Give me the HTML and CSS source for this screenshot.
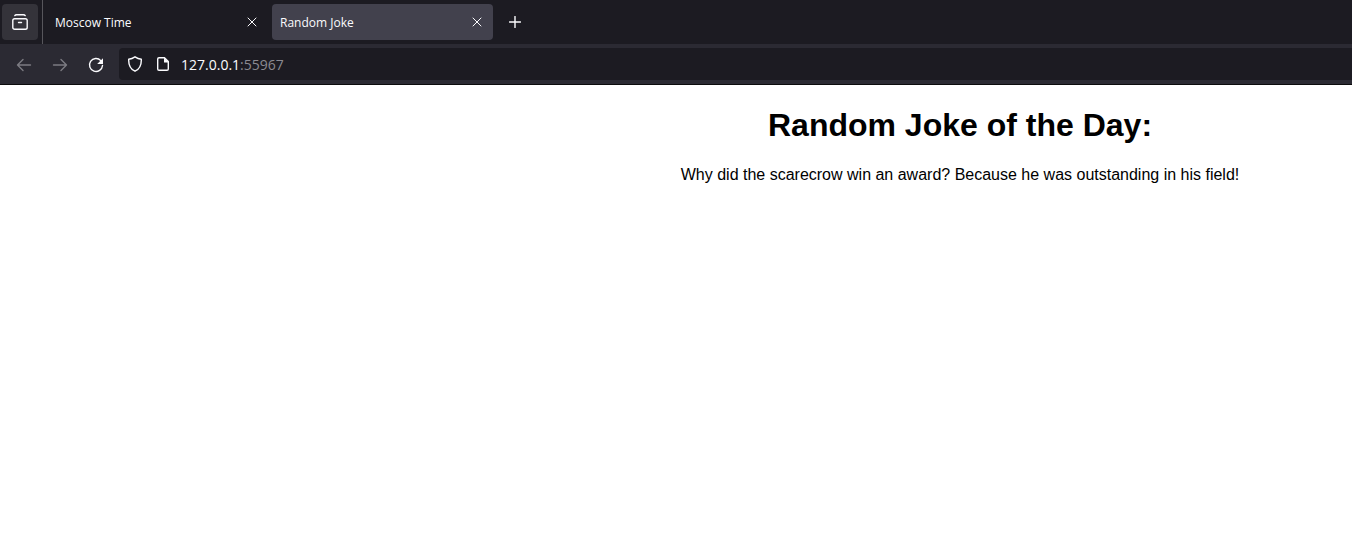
FILE: index.html
```
<!DOCTYPE html>
<html lang="en">
<head>
<meta charset="utf-8">
<title>Random Joke</title>
<link rel="stylesheet" href="styles.css">
</head>
<body>
<header class="browser">
  <div class="tabstrip">
    <button class="overview" type="button" aria-label="Recent browsing">
      <svg class="icon" viewBox="0 0 16 16"><path d="M2.800 1.600Q3.300 .8 4.500.8h7q1.200 0 1.700.8"/><rect x=".8" y="4.700" width="14.400" height="10.500" rx="1.800"/><path d="M6.500 8.500h3"/></svg>
    </button>
    <div class="tab tab-first">
      <button class="tab-title" type="button">Moscow Time</button>
      <button class="close" type="button" aria-label="Close Moscow Time"><svg class="icon-small" viewBox="0 0 10 10"><path d="M1 1l8 8M9 1l-8 8"/></svg></button>
    </div>
    <div class="tab tab-active">
      <button class="tab-title" type="button">Random Joke</button>
      <button class="close" type="button" aria-label="Close Random Joke"><svg class="icon-small" viewBox="0 0 10 10"><path d="M1 1l8 8M9 1l-8 8"/></svg></button>
    </div>
    <button class="new-tab" type="button" aria-label="New tab"><svg class="icon-plus" viewBox="0 0 12 12"><path d="M6 .5v11M.5 6h11"/></svg></button>
  </div>
  <nav class="toolbar">
    <button class="tool tool-disabled" type="button" aria-label="Back" disabled><svg class="icon" viewBox="0 0 16 16"><path d="M14.500 8H1.500M7 2.500L1.500 8 7 13.500"/></svg></button>
    <button class="tool tool-disabled" type="button" aria-label="Forward" disabled><svg class="icon" viewBox="0 0 16 16"><path d="M1.500 8h13M9 2.500L14.500 8 9 13.500"/></svg></button>
    <button class="tool" type="button" aria-label="Reload"><svg class="icon" viewBox="0 0 16 16"><path d="M12.800 3.600A6.500 6.500 0 1 0 14.500 8.500"/><path class="solid-flat" d="M15 1.200v5.300q0 .5-.5.5H9.200z"/></svg></button>
    <div class="address">
      <svg class="icon" viewBox="0 0 16 16"><path d="M8 .8Q11 2.800 14.300 3.300C14.500 8.500 12.800 13 8 15.200 3.200 13 1.500 8.500 1.700 3.300Q5 2.800 8 .8z"/></svg>
      <svg class="icon" viewBox="0 0 16 16"><path d="M9.500 1.700H4Q2.700 1.700 2.700 3v10Q2.700 14.300 4 14.300h8q1.300 0 1.300-1.300V5.500z"/><path class="solid-flat" d="M9 1.500v5h5z"/></svg>
      <div class="url" role="textbox" aria-label="Address" contenteditable="true" spellcheck="false">127.0.0.1<span class="port">:55967</span></div>
    </div>
  </nav>
</header>
<main class="page">
  <h1 class="heading">Random Joke of the Day:</h1>
  <p class="joke">Why did the scarecrow win an award? Because he was outstanding in his field!</p>
</main>
</body>
</html>
```
FILE: styles.css
```
* {
  box-sizing: border-box;
}

body {
  margin: 0;
  background: #fff;
  overflow-x: hidden;
}

button {
  margin: 0;
  padding: 0;
  border: 0;
  background: none;
  color: inherit;
  font: inherit;
}

svg {
  display: block;
  flex: none;
  fill: none;
  stroke: currentColor;
  stroke-width: 1;
  stroke-linecap: round;
  stroke-linejoin: round;
}

.solid-flat {
  fill: currentColor;
  stroke: none;
}

.icon {
  width: 16px;
  height: 16px;
  stroke-width: 1.4;
}

.icon-small {
  width: 10px;
  height: 10px;
}

.icon-plus {
  width: 12px;
  height: 12px;
  stroke-width: 1.4;
}

.browser {
  color: #fbfbfe;
  background: #1c1b22;
  font-family: "Segoe UI", "Open Sans", "Noto Sans", sans-serif;
  font-size: 12px;
}

.tabstrip {
  display: flex;
  align-items: center;
  height: 44px;
  padding-left: 2px;
}

.overview {
  display: grid;
  place-items: center;
  width: 36px;
  height: 36px;
  border-radius: 4px;
  background: #34333a;
}

.tab {
  display: flex;
  align-items: center;
  width: 221px;
  height: 36px;
  padding: 0 4px 0 8px;
  border-radius: 4px;
}

.tab-first {
  width: 230px;
  height: 44px;
  margin-left: 4px;
  padding: 0 8px 0 12px;
  border-left: 1px solid #57565c;
  border-radius: 0;
}

.tab-active {
  background: #42414d;
}

.tab-title {
  flex: 1;
  text-align: left;
}

.close {
  display: grid;
  place-items: center;
  width: 24px;
  height: 24px;
}

.new-tab {
  display: grid;
  place-items: center;
  width: 36px;
  height: 36px;
  margin-left: 4px;
}

.toolbar {
  display: flex;
  align-items: center;
  height: 41px;
  padding-left: 6px;
  background: #2b2a33;
  border-bottom: 1px solid #0c0c0d;
}

.tool {
  display: grid;
  place-items: center;
  width: 36px;
  height: 32px;
  padding-top: 2px;
}

.tool-disabled {
  color: #7c7b82;
}

.address {
  display: flex;
  flex: 1;
  align-items: center;
  gap: 12px;
  height: 32px;
  margin-left: 5px;
  padding-left: 8px;
  border-radius: 4px 0 0 4px;
  background: #1c1b22;
}

.url {
  flex: 1;
  margin-left: -2px;
  padding-top: 2px;
  font-size: 14px;
  line-height: 20px;
}

.port {
  color: #8b8a91;
}

.page {
  padding: 22px 0 22px 568px;
  color: #000;
  font-family: Arial, "Liberation Sans", sans-serif;
  text-align: center;
}

.heading {
  margin: 0 0 22px;
  font-size: 32px;
  line-height: 36px;
}

.joke {
  margin: 0;
  font-size: 16px;
  line-height: 20px;
}
```
